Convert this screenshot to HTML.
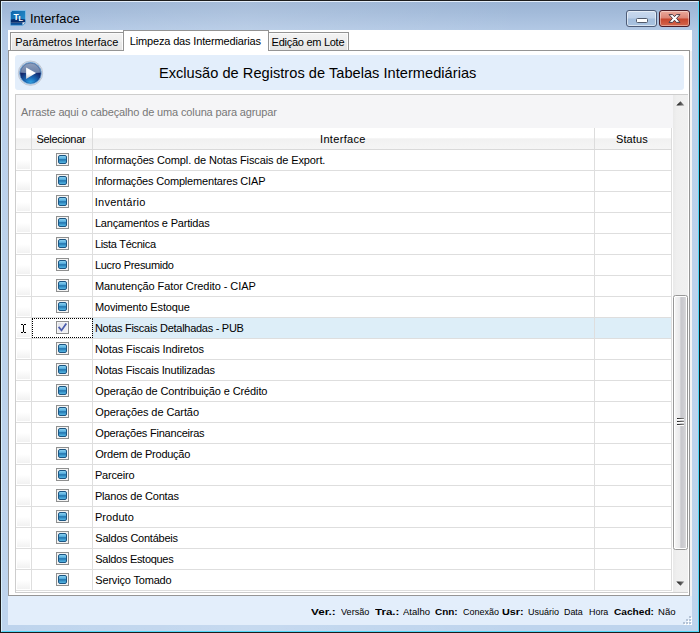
<!DOCTYPE html>
<html><head><meta charset="utf-8">
<title>Interface</title>
<style>
*{box-sizing:border-box;margin:0;padding:0}
html,body{width:700px;height:633px;overflow:hidden;background:#b9d1ea}
body{font-family:"Liberation Sans",sans-serif;font-size:11px;color:#000;position:relative}
div,span,i,b,svg{position:absolute;display:block}
#frame{left:0;top:0;width:700px;height:633px;background:linear-gradient(90deg,rgba(255,255,255,0) 0,rgba(255,255,255,.12) 35%,rgba(255,255,255,0) 75%),linear-gradient(180deg,#9ab3d4 0,#a3bbda 12px,#b3c9e5 30px,#bbd1eb 90px,#bed4ed 100%);border:1px solid #1c1c1c}
#frame2{left:1px;top:1px;width:698px;height:631px;border:1px solid #e4eefa;border-left-color:#d8f0fc;border-right-color:#52d8f8;border-bottom-color:#52d8f8}
#client{left:8px;top:30px;width:684px;height:595px;background:#fff}
#appicon{left:10px;top:10px}
#title{top:11px;font-size:12.8px;line-height:16px;white-space:nowrap}
#bmin{left:626px;top:10px;width:31px;height:17px;border:1px solid #4d5c78;border-radius:3px;background:linear-gradient(#c9d9ee,#bdd0e9 48%,#a3bddc 52%,#a9c3e1);box-shadow:inset 0 0 0 1px rgba(255,255,255,.55)}
#bmin i{left:9px;top:7px;width:12px;height:5px;background:#fff;border:1px solid #50596a;border-radius:1.5px}
#bclose{left:659px;top:10px;width:31px;height:17px;border:1px solid #4c1c26;border-radius:3px;background:linear-gradient(#eaa99b,#dc8474 48%,#c6452c 52%,#d4664c);box-shadow:inset 0 0 0 1px rgba(255,255,255,.4)}
#bclose svg{left:8px;top:2px}
.tab{top:32px;height:18px;border:1px solid #939393;border-bottom:none;background:linear-gradient(#f3f3f3,#eeeeee 50%,#eaeaea 50%,#e5e5e5);box-shadow:inset 1px 1px 0 #fbfbfb,inset -1px 0 0 #fbfbfb;font-size:11px;line-height:17px;white-space:nowrap}
.tab span{top:1px;line-height:16px}
.tab.act{top:30px;height:21px;background:#fff;z-index:2;box-shadow:none}
.tab.act span{top:2px}
#page{left:8px;top:50px;width:682px;height:546px;border:1px solid #959595;background:#fff}
#pager{left:690px;top:51px;width:2px;height:545px;background:#f4f4f4}
#hdr{left:15px;top:55px;width:669px;height:35px;background:#e3eefb;border-radius:3px;font-size:14.6px;line-height:35px;white-space:nowrap}
#hdr span{top:1px}
#play{left:17px;top:59px}
#grid{left:15px;top:94px;width:673px;height:499px;border:1px solid #cdcdcd;border-right:none;background:#f5f5f7}
#grp{top:105px;font-size:11px;color:#787878;line-height:14px;white-space:nowrap}
#gbody{left:16px;top:128px;width:657px;height:464px;background:#fff}
#ghead{left:16px;top:128px;width:656px;height:22px;background:linear-gradient(#fff,#fff 45%,#f1f1f1 52%,#f5f5f5);border-bottom:1px solid #d9d9d9}
.hc{top:0;height:21px;line-height:21px;border-right:1px solid #dcdcdc;white-space:nowrap}
.hc span{top:1px}
.row{left:16px;width:656px;height:21px;border-bottom:1px solid #dedede;background:#fff}
.row.sel{background:#ddeef8}
.row>div{top:0;height:20px;border-right:1px solid #dedede}
.ind{left:0;width:16px;background:linear-gradient(#fff,#fff 50%,#f0f0f0);box-shadow:inset 0 0 0 1px #fff}
.c1{left:16px;width:61px}
.c2{left:77px;width:502px;line-height:20px;white-space:nowrap}
.c3{left:579px;width:77px}
.cb{left:24px;top:3px;width:13px;height:13px;border:1px solid #8e8f8f;background:#f4f4f4}
.cb i{left:1px;top:1px;width:9px;height:9px;border:1px solid #1b5582;border-radius:2px;background:linear-gradient(#8ad0f0,#4ea8da 42%,#2172ab 52%,#3c98cc 75%,#55b4e2 100%)}
.cbx{left:24px;top:3px;width:13px;height:13px;border:1px solid #8e8f8f;background:linear-gradient(135deg,#dfe1ea,#f2f2f6);box-shadow:inset 0 0 0 1px #f4f4f4}
.cbx svg{left:0;top:0}
.sel .c1{outline:1px dotted #000;outline-offset:-1px;background:#fff}
.ibeam{left:5px;top:6px}
#sb{left:673px;top:95px;width:15px;height:497px;background:linear-gradient(90deg,#e9e9e9,#efefef 25%,#f0f0f0)}
.arr{left:3px}
#thumb{left:0px;top:200px;width:15px;height:255px;border:1px solid #979797;border-radius:2.5px;background:#fff}
#thi{left:1px;top:1px;right:1px;bottom:1px;background:linear-gradient(90deg,#f4f4f4,#e8e8ea 46%,#c6c6cb 52%,#cfcfd3 85%,#dadadc)}
#grip{left:3px;top:122px;width:7px;height:8px}
#grip i{left:0;width:7px;height:2px;background:linear-gradient(90deg,#222,#8a8a8a);border-bottom:1px solid #fff}
#grip i:nth-child(1){top:0}#grip i:nth-child(2){top:3px}#grip i:nth-child(3){top:6px}
#status{left:8px;top:596px;width:684px;height:29px;background:#e3eefb}
.st{top:605.6px;font-size:9.5px;line-height:12px;white-space:nowrap;transform-origin:0 0}
b.st{font-weight:bold}
#sizegrip{left:683px;top:616px}

</style></head><body>
<div id="frame"></div><div id="frame2"></div>
<div id="client"></div>
<svg id="appicon" width="16" height="16" viewBox="0 0 16 16">
<defs><linearGradient id="ig" x1="0" y1="0" x2="1" y2="1"><stop offset="0" stop-color="#0b62a6"/><stop offset="1" stop-color="#2f97d6"/></linearGradient>
<linearGradient id="ig2" x1="0" y1="0" x2="0" y2="1"><stop offset="0" stop-color="#0a3272"/><stop offset="0.55" stop-color="#052a68"/><stop offset="0.6" stop-color="#9ab2d0"/><stop offset="0.7" stop-color="#0a4c94"/><stop offset="1" stop-color="#1a66ac"/></linearGradient></defs>
<path d="M2.4 0.4 H15.6 V13 L12.8 15.6 H0.4 V2.4 Z" fill="url(#ig)" stroke="#8cc4ee" stroke-width="0.8"/>
<path d="M0.8 9.6 C4 8.6 11 8.6 15.2 9.6 V12.8 L12.6 15.3 H0.8 Z" fill="url(#ig2)"/>
<path d="M15.2 12.2 L12.6 15.3 L12.4 12.6 Z" fill="#e8eef6"/>
<text x="3.5" y="10.4" font-family="Liberation Sans, sans-serif" font-weight="bold" font-size="8.6" fill="#fff">T</text>
<text x="8.4" y="11.2" font-family="Liberation Sans, sans-serif" font-weight="bold" font-size="7.4" fill="#fff">L</text>
</svg>
<div id="title" style="left:29.9px;letter-spacing:0.03px">Interface</div>
<div id="bmin"><i></i></div>
<div id="bclose"><svg width="13" height="11" viewBox="0 0 13 11"><path d="M1 1.6 H4.6 L6.5 3.7 L8.4 1.6 H12 L8.5 5.4 L12 9.4 H8.4 L6.5 7.2 L4.6 9.4 H1 L4.5 5.4 Z" fill="#fff" stroke="#4a3a44" stroke-width="1" stroke-linejoin="round"/></svg></div>
<div id="page"></div>
<div id="pager"></div>
<div class="tab" style="left:10px;width:114px"><span style="left:4.2px;letter-spacing:0.02px">Parâmetros Interface</span></div>
<div class="tab act" style="left:123px;width:146px"><span style="left:5.8px;letter-spacing:-0.16px">Limpeza das Intermediarias</span></div>
<div class="tab" style="left:268px;width:81px"><span style="left:2.6px;letter-spacing:-0.27px">Edição em Lote</span></div>
<div id="hdr"><span style="left:143.9px;letter-spacing:0.03px">Exclusão de Registros de Tabelas Intermediárias</span></div>
<svg id="play" width="27" height="27" viewBox="-0.5 -1.2 27 27">
<defs>
<linearGradient id="pg1" x1="0" y1="0" x2="0" y2="1"><stop offset="0" stop-color="#9aa8c0"/><stop offset="1" stop-color="#687fa9"/></linearGradient>
<radialGradient id="pg3" cx="0.5" cy="1" r="0.62"><stop offset="0" stop-color="#3bb4ee"/><stop offset="0.45" stop-color="#1a6fbc"/><stop offset="1" stop-color="#13266a"/></radialGradient>
<linearGradient id="pg2" x1="0" y1="0" x2="0" y2="1"><stop offset="0" stop-color="#fff"/><stop offset="0.55" stop-color="#fff"/><stop offset="1" stop-color="#bfc4cd"/></linearGradient>
<clipPath id="pc"><circle cx="13" cy="13" r="10.8"/></clipPath>
</defs>
<circle cx="13" cy="13" r="12.2" fill="#d3d9e4" stroke="#b9c0ce" stroke-width="0.8"/>
<circle cx="13" cy="13" r="10.8" fill="url(#pg3)"/>
<path d="M0 0 H26 V12.2 Q13 14.2 0 12.2 Z" fill="url(#pg1)" clip-path="url(#pc)"/>
<circle cx="13" cy="13" r="10.8" fill="none" stroke="#7ab8e8" stroke-width="0.8"/>
<circle cx="13" cy="13" r="10.1" fill="none" stroke="#1c3a78" stroke-opacity="0.45" stroke-width="0.8"/>
<path d="M8.6 7.2 L18.5 12.9 L8.6 18.8 Z" fill="url(#pg2)"/>
</svg>
<div id="grid"></div>
<div id="grp" style="left:21.0px;letter-spacing:-0.14px">Arraste aqui o cabeçalho de uma coluna para agrupar</div>
<div id="gbody"></div>
<div id="ghead"><div class="hc" style="left:0;width:16px"></div><div class="hc" style="left:16px;width:61px"><span style="left:4.5px;letter-spacing:-0.32px">Selecionar</span></div><div class="hc" style="left:77px;width:502px"><span style="left:227.0px;letter-spacing:0.33px">Interface</span></div><div class="hc" style="left:579px;width:77px"><span style="left:21.0px;letter-spacing:0.10px">Status</span></div></div>
<div class="row" style="top:150px"><div class="ind"></div><div class="c1"><span class="cb"><i></i></span></div><div class="c2" style="letter-spacing:-0.12px;padding-left:1.8px">Informações Compl. de Notas Fiscais de Export.</div><div class="c3"></div></div>
<div class="row" style="top:171px"><div class="ind"></div><div class="c1"><span class="cb"><i></i></span></div><div class="c2" style="letter-spacing:-0.18px;padding-left:1.8px">Informações Complementares CIAP</div><div class="c3"></div></div>
<div class="row" style="top:192px"><div class="ind"></div><div class="c1"><span class="cb"><i></i></span></div><div class="c2" style="letter-spacing:0.25px;padding-left:1.8px">Inventário</div><div class="c3"></div></div>
<div class="row" style="top:213px"><div class="ind"></div><div class="c1"><span class="cb"><i></i></span></div><div class="c2" style="letter-spacing:-0.18px;padding-left:1.9px">Lançamentos e Partidas</div><div class="c3"></div></div>
<div class="row" style="top:234px"><div class="ind"></div><div class="c1"><span class="cb"><i></i></span></div><div class="c2" style="letter-spacing:-0.29px;padding-left:1.9px">Lista Técnica</div><div class="c3"></div></div>
<div class="row" style="top:255px"><div class="ind"></div><div class="c1"><span class="cb"><i></i></span></div><div class="c2" style="letter-spacing:-0.30px;padding-left:1.9px">Lucro Presumido</div><div class="c3"></div></div>
<div class="row" style="top:276px"><div class="ind"></div><div class="c1"><span class="cb"><i></i></span></div><div class="c2" style="letter-spacing:-0.08px;padding-left:1.9px">Manutenção Fator Credito - CIAP</div><div class="c3"></div></div>
<div class="row" style="top:297px"><div class="ind"></div><div class="c1"><span class="cb"><i></i></span></div><div class="c2" style="letter-spacing:-0.14px;padding-left:1.9px">Movimento Estoque</div><div class="c3"></div></div>
<div class="row sel" style="top:318px"><div class="ind"><svg class="ibeam" width="5" height="9" viewBox="0 0 5 9"><path d="M0 0.5 H2 M3 0.5 H5 M0 8.5 H2 M3 8.5 H5 M2.5 1 V8" fill="none" stroke="#000" stroke-width="1" shape-rendering="crispEdges"/></svg></div><div class="c1"><span class="cbx"><svg width="11" height="11" viewBox="0 0 11 11"><path d="M1.6 4.9 L4.5 8.4 L9.3 1.4" fill="none" stroke="#4a5cab" stroke-width="1.75"/></svg></span></div><div class="c2" style="letter-spacing:-0.28px;padding-left:1.9px">Notas Fiscais Detalhadas - PUB</div><div class="c3"></div></div>
<div class="row" style="top:339px"><div class="ind"></div><div class="c1"><span class="cb"><i></i></span></div><div class="c2" style="letter-spacing:-0.10px;padding-left:1.9px">Notas Fiscais Indiretos</div><div class="c3"></div></div>
<div class="row" style="top:360px"><div class="ind"></div><div class="c1"><span class="cb"><i></i></span></div><div class="c2" style="letter-spacing:-0.16px;padding-left:1.9px">Notas Fiscais Inutilizadas</div><div class="c3"></div></div>
<div class="row" style="top:381px"><div class="ind"></div><div class="c1"><span class="cb"><i></i></span></div><div class="c2" style="letter-spacing:-0.12px;padding-left:2.3px">Operação de Contribuição e Crédito</div><div class="c3"></div></div>
<div class="row" style="top:402px"><div class="ind"></div><div class="c1"><span class="cb"><i></i></span></div><div class="c2" style="letter-spacing:-0.08px;padding-left:2.3px">Operações de Cartão</div><div class="c3"></div></div>
<div class="row" style="top:423px"><div class="ind"></div><div class="c1"><span class="cb"><i></i></span></div><div class="c2" style="letter-spacing:-0.22px;padding-left:2.3px">Operações Financeiras</div><div class="c3"></div></div>
<div class="row" style="top:444px"><div class="ind"></div><div class="c1"><span class="cb"><i></i></span></div><div class="c2" style="letter-spacing:-0.25px;padding-left:2.3px">Ordem de Produção</div><div class="c3"></div></div>
<div class="row" style="top:465px"><div class="ind"></div><div class="c1"><span class="cb"><i></i></span></div><div class="c2" style="letter-spacing:-0.16px;padding-left:1.9px">Parceiro</div><div class="c3"></div></div>
<div class="row" style="top:486px"><div class="ind"></div><div class="c1"><span class="cb"><i></i></span></div><div class="c2" style="letter-spacing:-0.19px;padding-left:1.9px">Planos de Contas</div><div class="c3"></div></div>
<div class="row" style="top:507px"><div class="ind"></div><div class="c1"><span class="cb"><i></i></span></div><div class="c2" style="letter-spacing:0.07px;padding-left:1.9px">Produto</div><div class="c3"></div></div>
<div class="row" style="top:528px"><div class="ind"></div><div class="c1"><span class="cb"><i></i></span></div><div class="c2" style="letter-spacing:-0.23px;padding-left:2.3px">Saldos Contábeis</div><div class="c3"></div></div>
<div class="row" style="top:549px"><div class="ind"></div><div class="c1"><span class="cb"><i></i></span></div><div class="c2" style="letter-spacing:-0.30px;padding-left:2.3px">Saldos Estoques</div><div class="c3"></div></div>
<div class="row" style="top:570px"><div class="ind"></div><div class="c1"><span class="cb"><i></i></span></div><div class="c2" style="letter-spacing:-0.18px;padding-left:2.3px">Serviço Tomado</div><div class="c3"></div></div>
<div id="sb">
<svg class="arr" style="top:6px" width="9" height="5" viewBox="0 0 9 5"><defs><linearGradient id="ag" x1="0" y1="0" x2="1" y2="0"><stop offset="0" stop-color="#111"/><stop offset="1" stop-color="#8a8a8a"/></linearGradient></defs><path d="M0.3 4.6 L4.5 0.2 L8.3 4.6 Z" fill="url(#ag)"/></svg>
<div id="thumb"><div id="thi"></div><div id="grip"><i></i><i></i><i></i></div></div>
<svg class="arr" style="top:486px" width="9" height="5" viewBox="0 0 9 5"><path d="M0.3 0.4 L4.5 4.8 L8.3 0.4 Z" fill="url(#ag)"/></svg>
</div>
<div id="status"></div>
<b class="st" style="left:311.3px;transform:scaleX(1.230)">Ver.:</b>
<span class="st" style="left:340.6px;transform:scaleX(0.959)">Versão</span>
<b class="st" style="left:374.8px;transform:scaleX(1.213)">Tra.:</b>
<span class="st" style="left:403.4px;transform:scaleX(1.002)">Atalho</span>
<b class="st" style="left:435.3px;transform:scaleX(1.046)">Cnn:</b>
<span class="st" style="left:462.5px;transform:scaleX(0.944)">Conexão</span>
<b class="st" style="left:502.3px;transform:scaleX(1.140)">Usr:</b>
<span class="st" style="left:527.9px;transform:scaleX(0.948)">Usuário</span>
<span class="st" style="left:564.2px;transform:scaleX(0.936)">Data</span>
<span class="st" style="left:588.7px;transform:scaleX(0.937)">Hora</span>
<b class="st" style="left:613.9px;transform:scaleX(1.066)">Cached:</b>
<span class="st" style="left:657.8px;transform:scaleX(1.007)">Não</span>
<svg id="sizegrip" width="9" height="9" viewBox="0 0 9 9"><g fill="#fff"><rect x="7" y="1" width="2" height="2"/><rect x="4" y="4" width="2" height="2"/><rect x="7" y="4" width="2" height="2"/><rect x="1" y="7" width="2" height="2"/><rect x="4" y="7" width="2" height="2"/><rect x="7" y="7" width="2" height="2"/></g><g fill="#b4c3d6"><rect x="6" y="0" width="2" height="2"/><rect x="3" y="3" width="2" height="2"/><rect x="6" y="3" width="2" height="2"/><rect x="0" y="6" width="2" height="2"/><rect x="3" y="6" width="2" height="2"/><rect x="6" y="6" width="2" height="2"/></g></svg>
</body></html>
